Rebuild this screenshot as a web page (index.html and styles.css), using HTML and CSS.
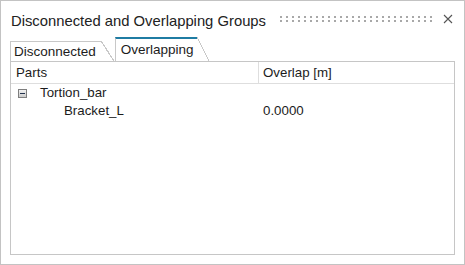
FILE: index.html
```html
<!DOCTYPE html>
<html lang="en">
<head>
    <meta charset="UTF-8">
    <meta name="viewport" content="width=device-width, initial-scale=1.0">
    <title>Disconnected and Overlapping Groups</title>
    <link rel="stylesheet" href="styles.css">
</head>
<body>
    <div class="window">
        <div class="titlebar">
            <span class="title">Disconnected and Overlapping Groups</span>
            <svg class="grip" width="154" height="6" viewBox="0 0 154 6">
                <defs>
                    <pattern id="dots" width="6" height="4" patternUnits="userSpaceOnUse">
                        <rect width="2" height="2" fill="#a8a8a8"/>
                    </pattern>
                </defs>
                <rect width="154" height="6" fill="url(#dots)"/>
            </svg>
            <svg class="close" width="10" height="10" viewBox="0 0 10 10">
                <path d="M1 1 L9 9 M9 1 L1 9" stroke="#555" stroke-width="1.1" fill="none"/>
            </svg>
        </div>
        <div class="tabs">
            <div class="tab">Disconnected</div>
            <div class="tab active">Overlapping</div>
        </div>
        <div class="panel">
            <div class="row head">
                <div class="cell first">Parts</div>
                <div class="cell">Overlap [m]</div>
            </div>
            <div class="row">
                <div class="cell first parent">
                    <svg class="toggle" width="9" height="9" viewBox="0 0 9 9">
                        <defs>
                            <linearGradient id="boxfill" x1="0" y1="0" x2="0" y2="1">
                                <stop offset="0" stop-color="#f4f4f4"/>
                                <stop offset="1" stop-color="#c8c8c8"/>
                            </linearGradient>
                        </defs>
                        <rect x="0.5" y="0.5" width="8" height="8" fill="url(#boxfill)" stroke="#7e7e7e"/>
                        <path d="M2 4.5 H7" stroke="#22324d" stroke-width="1"/>
                    </svg>
                    Tortion_bar
                </div>
                <div class="cell"></div>
            </div>
            <div class="row">
                <div class="cell first child">Bracket_L</div>
                <div class="cell">0.0000</div>
            </div>
        </div>
    </div>
</body>
</html>
```

FILE: styles.css
```css
body {
    margin: 0;
    font-family: "Liberation Sans", Arial, sans-serif;
    color: #1c1c1c;
    background-color: #fff;
}
.window {
    width: 465px;
    height: 265px;
    box-sizing: border-box;
    border: 1px solid #c3c3c3;
    display: flex;
    flex-direction: column;
}
.titlebar {
    height: 36px;
    box-sizing: border-box;
    padding: 3px 0 0 10px;
    display: flex;
    align-items: center;
}
.title {
    font-size: 14.8px;
    color: #222;
}
.grip {
    margin-left: auto;
    margin-top: -3px;
}
.close {
    margin: -3px 11px 0 9px;
}
.tabs {
    height: 24px;
    margin-left: 9px;
    display: flex;
    align-items: flex-end;
    font-size: 13.5px;
}
.tab {
    position: relative;
    height: 19px;
    line-height: 19px;
    padding: 0 5px 0 3px;
    border-left: 1px solid #c8c8c8;
    border-top: 1px solid #c8c8c8;
    background-color: #fff;
    margin-right: 14px;
}
.tab::after {
    content: "";
    position: absolute;
    top: -1px;
    right: -13px;
    width: 13px;
    height: 20px;
    background: linear-gradient(to top right, #fff calc(50% - 0.6px), #c8c8c8 calc(50% - 0.6px), #c8c8c8 calc(50% + 0.6px), transparent calc(50% + 0.6px));
}
.tab.active {
    height: 22px;
    line-height: 21px;
    padding: 0 3px 0 5px;
    border-top: 2px solid #1f7ca3;
    margin-right: 0;
}
.tab.active::after {
    top: -2px;
    right: -12px;
    width: 12px;
    height: 24px;
}
.panel {
    flex: 1;
    margin: 0 9px 9px 9px;
    border: 1px solid #c6c6c6;
    background-color: #fff;
    font-size: 13.3px;
}
.row {
    display: grid;
    grid-template-columns: 248px 1fr;
    height: 18px;
    line-height: 18px;
}
.row.head {
    height: 21px;
    line-height: 21px;
    border-bottom: 1px solid #dedede;
}
.cell {
    padding-left: 4px;
    white-space: nowrap;
}
.cell.first {
    padding-left: 5px;
}
.head .cell.first {
    border-right: 1px solid #dedede;
}
.parent {
    display: flex;
    align-items: center;
    gap: 13px;
}
.parent .toggle {
    margin-left: 2px;
}
.cell.first.child {
    padding-left: 53px;
}
```
